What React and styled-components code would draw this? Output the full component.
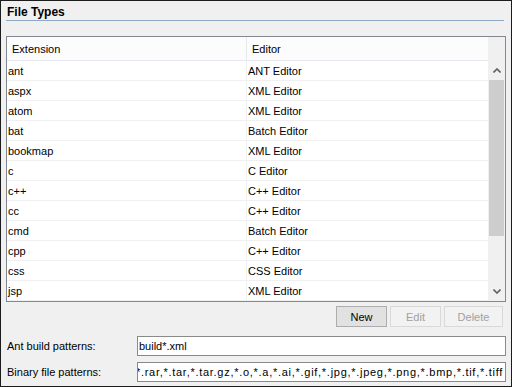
import styled, { createGlobalStyle } from "styled-components";

const GlobalStyle = createGlobalStyle`
  * {
    box-sizing: border-box;
  }
  body {
    margin: 0;
    font-family: "Liberation Sans", Arial, sans-serif;
    font-size: 11px;
    color: #000;
  }
`;

const Frame = styled.div`
  width: 512px;
  height: 387px;
  border: 1px solid #1c1c1c;
  background: #f0f0f0;
  padding: 0 5px 0 5px;
  display: flex;
  flex-direction: column;
`;

const Title = styled.div`
  height: 20px;
  padding: 4px 0 0 1px;
  margin-right: 2px;
  font-size: 12px;
  font-weight: bold;
  border-bottom: 1px solid #8ea8c6;
`;

const Table = styled.div`
  margin-top: 15px;
  height: 266px;
  border: 1px solid #828790;
  display: grid;
  grid-template-columns: 1fr 17px;
  grid-template-rows: 24px 1fr;
  background: #fff;
`;

const Header = styled.div`
  display: grid;
  grid-template-columns: 240px 1fr;
  background: #fcfcfd;
  border-bottom: 1px solid #e6eaf0;
`;

const HeadCell = styled.div`
  display: flex;
  align-items: center;
  padding: 1px 0 0 5px;
  border-right: ${(p) => (p.$last ? "none" : "1px solid #e6eaf0")};
`;

const Corner = styled.div`
  background: #f0f0f0;
`;

const Body = styled.div`
  display: flex;
  flex-direction: column;
`;

const Row = styled.div`
  display: grid;
  grid-template-columns: 240px 1fr;
  height: 20px;
  border-bottom: 1px solid #f0f0f0;
`;

const Cell = styled.div`
  display: flex;
  align-items: center;
  padding-left: 1px;
  border-right: ${(p) => (p.$last ? "none" : "1px solid #f0f0f0")};
  white-space: nowrap;
`;

const Scrollbar = styled.div`
  background: #f0f0f0;
  display: flex;
  flex-direction: column;
`;

const Arrow = styled.div`
  height: 19px;
  display: flex;
  align-items: center;
  justify-content: center;
`;

const Track = styled.div`
  flex: 1;
  padding: 0 1px;
`;

const Thumb = styled.div`
  height: 156px;
  background: #cdcdcd;
`;

const ButtonBar = styled.div`
  margin-top: 4px;
  display: flex;
  justify-content: flex-end;
  gap: 3px;
  padding-right: 3px;
`;

const Button = styled.div`
  width: ${(p) => p.$w}px;
  height: 21px;
  display: flex;
  align-items: center;
  justify-content: center;
  border: 1px solid ${(p) => (p.$disabled ? "#d9d9d9" : "#adadad")};
  background: ${(p) => (p.$disabled ? "#f2f2f2" : "#e1e1e1")};
  color: ${(p) => (p.$disabled ? "#a0a0a0" : "#000")};
`;

const Form = styled.div`
  margin-top: 9px;
  display: grid;
  grid-template-columns: 131px 1fr;
  row-gap: 6px;
  align-items: center;
`;

const Label = styled.div`
  padding-left: 1px;
`;

const Field = styled.div`
  height: 20px;
  border: 1px solid #8a8a8a;
  background: #fff;
  display: flex;
  align-items: center;
  justify-content: ${(p) => (p.$end ? "flex-end" : "flex-start")};
  overflow: hidden;
  white-space: nowrap;
  letter-spacing: ${(p) => (p.$end ? "0.72px" : "normal")};
  padding: 0 2px 0 1px;
`;

const Chevron = ({ up }) => (
  <svg width="8" height="5" viewBox="0 0 8 5">
    <path
      d={up ? "M0.5 4.5 L4 1 L7.5 4.5" : "M0.5 0.5 L4 4 L7.5 0.5"}
      fill="none"
      stroke="#606060"
      strokeWidth="1.6"
    />
  </svg>
);

const rows = [
  ["ant", "ANT Editor"],
  ["aspx", "XML Editor"],
  ["atom", "XML Editor"],
  ["bat", "Batch Editor"],
  ["bookmap", "XML Editor"],
  ["c", "C Editor"],
  ["c++", "C++ Editor"],
  ["cc", "C++ Editor"],
  ["cmd", "Batch Editor"],
  ["cpp", "C++ Editor"],
  ["css", "CSS Editor"],
  ["jsp", "XML Editor"],
];

export default function App() {
  return (
    <>
      <GlobalStyle />
      <Frame>
        <Title>File Types</Title>
        <Table>
          <Header>
            <HeadCell>Extension</HeadCell>
            <HeadCell $last>Editor</HeadCell>
          </Header>
          <Corner />
          <Body>
            {rows.map(([ext, ed]) => (
              <Row key={ext}>
                <Cell>{ext}</Cell>
                <Cell $last>{ed}</Cell>
              </Row>
            ))}
          </Body>
          <Scrollbar>
            <Arrow>
              <Chevron up />
            </Arrow>
            <Track>
              <Thumb />
            </Track>
            <Arrow>
              <Chevron />
            </Arrow>
          </Scrollbar>
        </Table>
        <ButtonBar>
          <Button $w={51}>New</Button>
          <Button $w={51} $disabled>
            Edit
          </Button>
          <Button $w={59} $disabled>
            Delete
          </Button>
        </ButtonBar>
        <Form>
          <Label>Ant build patterns:</Label>
          <Field>build*.xml</Field>
          <Label>Binary file patterns:</Label>
          <Field $end>
            *.zip,*.jar,*.rar,*.tar,*.tar.gz,*.o,*.a,*.ai,*.gif,*.jpg,*.jpeg,*.png,*.bmp,*.tif,*.tiff
          </Field>
        </Form>
      </Frame>
    </>
  );
}
